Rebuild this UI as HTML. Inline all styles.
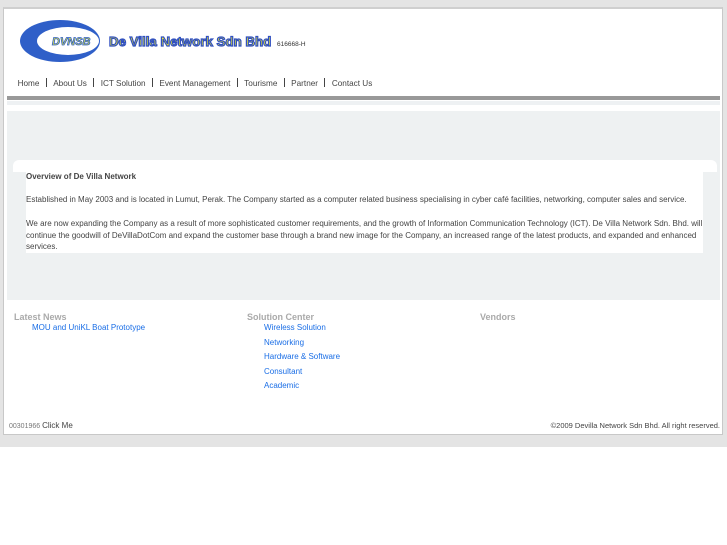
<!DOCTYPE html>
<html><head><style>
body{margin:0;background:#fff;font-family:"Liberation Sans",sans-serif;}
.bg{position:absolute;left:0;top:0;width:727px;height:447px;background:#e4e4e4;}
.wrap{position:absolute;left:3px;top:7px;width:718px;height:425px;background:#fff;border:1px solid #c8c8c8;border-top:2px solid #cfcfcf;}
.nav{position:absolute;left:14px;top:78px;font-size:8.2px;color:#444;white-space:nowrap;}
.nav span{margin:0 3.6px;}
.nav i{font-style:normal;display:inline-block;width:1px;height:9px;background:#444;vertical-align:-1px;margin:0 2.8px;}
.p{font-size:8px;color:#444;line-height:11.7px;}
a{color:#1a6ee6;text-decoration:none;}
</style></head><body>
<div class="bg"></div>
<div class="wrap"></div>
<svg style="position:absolute;left:18px;top:18px" width="90" height="46" viewBox="0 0 90 46">
<ellipse cx="42" cy="23" rx="40" ry="21" fill="#2f5fc8"/>
<ellipse cx="50" cy="23" rx="31" ry="14" fill="#fff"/>
<text x="34" y="27" font-size="11" font-weight="bold" font-style="italic" fill="#e8e83a" stroke="#2f5fc8" stroke-width="0.8" font-family="Liberation Sans">DVNSB</text>
</svg>
<div style="position:absolute;left:109px;top:34px;font-size:13.3px;font-weight:bold;color:#f2ee2a;-webkit-text-stroke:1.2px #2f4fc0;">De Villa Network Sdn Bhd</div>
<div style="position:absolute;left:277px;top:41px;font-size:6.5px;color:#333;">616668-H</div>
<div class="nav"><span>Home</span><i></i><span>About Us</span><i></i><span>ICT Solution</span><i></i><span>Event Management</span><i></i><span>Tourisme</span><i></i><span>Partner</span><i></i><span>Contact Us</span></div>
<div style="position:absolute;left:7px;top:96px;width:713px;height:4px;background:#999;"></div>
<div style="position:absolute;left:7px;top:101px;width:713px;height:4px;background:#eef1f3;"></div>
<div style="position:absolute;left:7px;top:111px;width:713px;height:189px;background:#eef1f2;"></div>
<div style="position:absolute;left:13px;top:160px;width:704px;height:12px;background:#fff;border-radius:6px 6px 0 0;"></div>
<div style="position:absolute;left:26px;top:170px;width:677px;height:83px;background:#fff;"></div>
<div class="p" style="position:absolute;left:26px;top:171px;width:680px;">
<b>Overview of De Villa Network</b><br><br>
Established in May 2003 and is located in Lumut, Perak. The Company started as a computer related business specialising in cyber café facilities, networking, computer sales and service.<br><br>
We are now expanding the Company as a result of more sophisticated customer requirements, and the growth of Information Communication Technology (ICT). De Villa Network Sdn. Bhd. will continue the goodwill of DeVillaDotCom and expand the customer base through a brand new image for the Company, an increased range of the latest products, and expanded and enhanced services.
</div>
<div style="position:absolute;left:14px;top:312px;font-size:9px;font-weight:bold;color:#aaa;">Latest News</div>
<div style="position:absolute;left:247px;top:312px;font-size:9px;font-weight:bold;color:#aaa;">Solution Center</div>
<div style="position:absolute;left:480px;top:312px;font-size:9px;font-weight:bold;color:#aaa;">Vendors</div>
<div style="position:absolute;left:32px;top:323px;font-size:8px;"><a>MOU and UniKL Boat Prototype</a></div>
<div style="position:absolute;left:264px;top:321px;font-size:8px;line-height:14.5px;"><a>Wireless Solution</a><br><a>Networking</a><br><a>Hardware &amp; Software</a><br><a>Consultant</a><br><a>Academic</a></div>
<div style="position:absolute;left:9px;top:421px;font-size:7px;color:#777;">00301966 <span style="font-size:8px;color:#444">Click Me</span></div>
<div style="position:absolute;right:7px;top:421px;font-size:7.5px;color:#444;">©2009 Devilla Network Sdn Bhd. All right reserved.</div>
</body></html>
